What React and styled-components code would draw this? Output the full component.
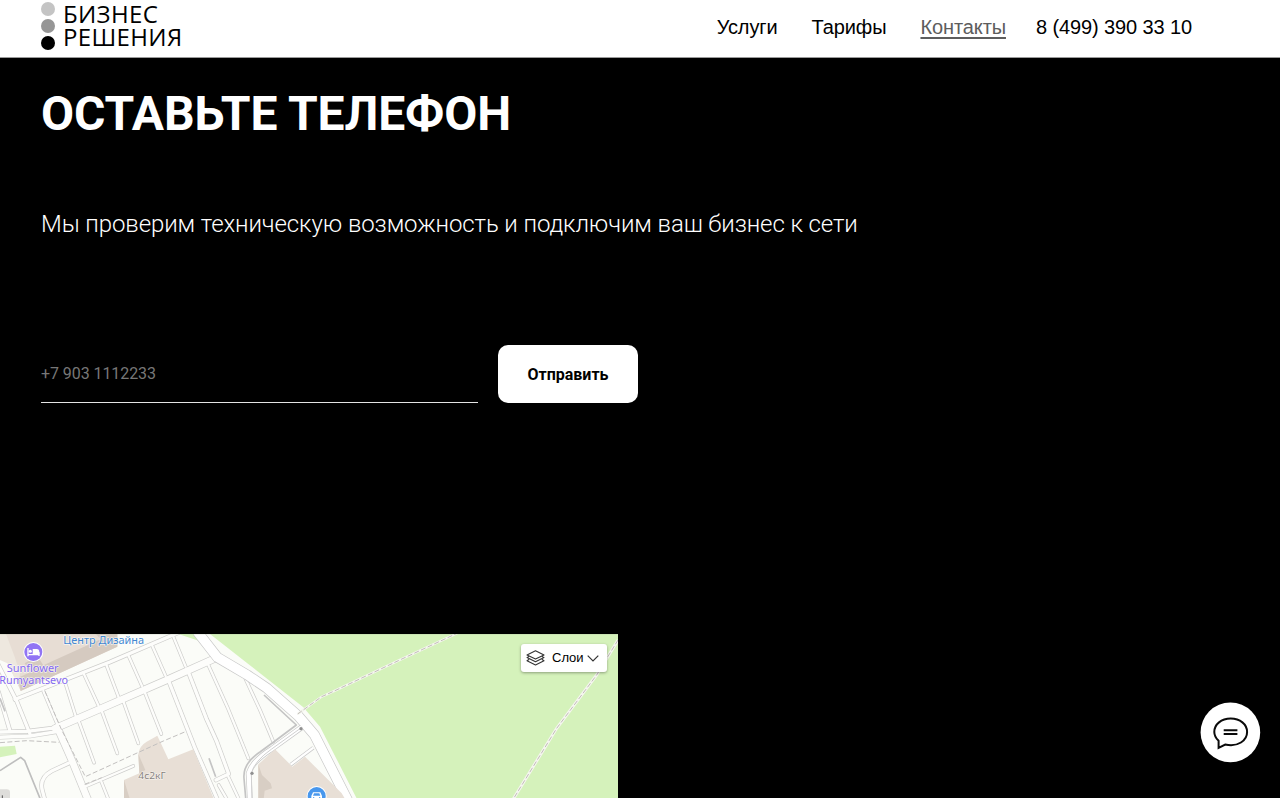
import React from "react";
import styled, { createGlobalStyle } from "styled-components";

const Global = createGlobalStyle`
  *, *::before, *::after { box-sizing: border-box; }
  html, body { margin: 0; background: #000; }
  body { height: 798px; overflow: hidden; }
`;

const Page = styled.div`
  display: flex;
  flex-direction: column;
  width: 1280px;
  height: 798px;
  overflow: hidden;
  background: #000;
  color: #fff;
  font-family: Roboto, sans-serif;
`;

const Header = styled.header`
  display: flex;
  flex: none;
  justify-content: space-between;
  height: 58px;
  padding: 0 88px 0 41px;
  background: #fff;
  border-bottom: 1px solid #9b9b9b;
  color: #000;
`;

const Logo = styled.a`
  display: flex;
  gap: 8px;
  height: 52px;
`;

const Dots = styled.span`
  display: flex;
  flex-direction: column;
  gap: 3px;
  padding-top: 2px;
`;

const Dot = styled.span`
  width: 14px;
  height: 14px;
  border-radius: 50%;
  background: ${(p) => p.$color};
`;

const LogoText = styled.span`
  padding-top: 2px;
  font: 400 24px/23px "Open Sans", sans-serif;
  letter-spacing: 0.35px;
  white-space: nowrap;
`;

const Nav = styled.nav`
  display: flex;
  font: 20px/55px "Liberation Sans", Arial, sans-serif;
  letter-spacing: -0.11px;
  white-space: nowrap;
`;

const NavItem = styled.a`
  margin-left: ${(p) => p.$gap || "34px"};
  color: ${(p) => (p.$active ? "#5d5d5d" : "#000")};
  text-decoration: ${(p) => (p.$active ? "underline 2px" : "none")};
  text-underline-offset: 3px;
  text-decoration-skip-ink: none;
`;

const Main = styled.main`
  display: flex;
  flex: none;
  flex-direction: column;
  height: 576px;
  padding: 26px 41px 0;
`;

const Title = styled.h1`
  margin: 0;
  font-size: 48px;
  font-weight: 700;
  line-height: 59px;
  letter-spacing: -0.1px;
`;

const Lead = styled.p`
  margin: 63px 0 0;
  font-size: 24px;
  font-weight: 300;
  line-height: 36px;
  letter-spacing: -0.1px;
`;

const Form = styled.form`
  display: flex;
  gap: 20px;
  margin-top: 103px;
`;

const Phone = styled.input`
  width: 437px;
  height: 58px;
  padding: 0;
  border: 0;
  border-bottom: 1px solid #e4e4e4;
  outline: 0;
  background: transparent;
  color: #fff;
  font: 400 16px Roboto, sans-serif;
  letter-spacing: -0.07px;
  &::placeholder { color: #777; opacity: 1; }
`;

const Submit = styled.button`
  width: 140px;
  height: 58px;
  border: 0;
  border-radius: 10px;
  background: #fff;
  color: #000;
  font: 700 16px Roboto, sans-serif;
`;

const MapFrame = styled.section`
  position: relative;
  width: 618px;
  height: 164px;
  overflow: hidden;
`;

const MapDrawing = styled.svg`
  display: block;
  width: 618px;
  height: 164px;
`;

const Layers = styled.button`
  position: absolute;
  top: 10px;
  right: 11px;
  display: flex;
  align-items: center;
  width: 86px;
  height: 28px;
  padding: 0 8px 0 5px;
  border: 0;
  border-radius: 3px;
  background: #fff;
  box-shadow: 0 1px 3px rgba(0, 0, 0, 0.35);
  color: #000;
  font: 13px "Liberation Sans", Arial, sans-serif;
`;

const LayersLabel = styled.span`
  flex: 1;
  padding: 0 0 1px 7px;
  text-align: left;
`;

const ChatButton = styled.button`
  position: absolute;
  left: 1200px;
  top: 702px;
  width: 61px;
  height: 61px;
  padding: 0;
  border: 0;
  border-radius: 50%;
  background: transparent;
`;

const ChatIcon = styled.svg`
  display: block;
  width: 61px;
  height: 61px;
`;

const wide = [
  "M165 295 L330 224 L500 150 L652 82",
  "M172 292 L215 390 L266 515",
];

const streets = [
  "M45 208 L330 96 L535 8",
  "M-5 105 L50 213 L90 312",
  "M-5 185 L30 303",
  "M-5 306 L80 304 L172 293",
  "M-5 322 L90 318 L175 304",
  "M505 150 L584 352 L655 515",
  "M565 126 L620 268 L650 334 L686 432 L648 450",
  "M205 400 L155 423 Q115 445 128 485 L136 515",
];

const lanes = [
  "M130 183 L174 288",
  "M193 150 L227 258",
  "M250 128 L295 226",
  "M318 102 L356 202",
  "M385 76 L426 168",
  "M457 48 L497 138",
  "M520 20 L557 110",
  "M235 270 L282 398",
  "M304 240 L352 370",
  "M370 214 L415 340",
  "M434 186 L484 312",
  "M625 105 L685 238 L745 385",
  "M737 148 L780 240 L820 335",
  "M255 470 L400 408",
  "M304 455 L328 515",
  "M685 440 L720 515",
  "M656 465 L685 515",
];

function Roads({ paths, width, casing }) {
  return (
    <g fill="none" strokeLinecap="round" strokeLinejoin="round"
      stroke={casing ? "#cdcdcb" : "#fdfdfb"} strokeWidth={casing ? width + 4 : width}>
      {paths.map((d) => <path key={d} d={d} />)}
    </g>
  );
}

function CityMap() {
  return (
    <MapDrawing viewBox="0 12 1854 492">
      <rect y="12" width="1854" height="492" fill="#fbfcf8" />
      <path d="M630 12 L740 98 L910 232 L960 290 L1075 515 L1854 515 L1854 12Z" fill="#d5f2bb" />
      <path d="M0 350 L45 347 L50 372 L0 382Z M535 12 L600 12 L614 38Z" fill="#d5f2bb" />
      <path d="M0 12 L352 12 L352 50 L62 183 L20 90 L0 60Z" fill="#e7ddd4" />
      <path d="M288 12 L352 12 L352 50 L62 183 L54 143 L92 126 L74 100 L112 78 L130 106 L302 28Z" fill="#d5cac0" />
      <path d="M0 12 L18 12 L44 80 L60 130 L54 165 L22 100 L0 90Z" fill="#eee8df" />

      <Roads paths={streets} width={10} casing />
      <Roads paths={lanes} width={7} casing />
      <Roads paths={wide} width={20} casing />
      <Roads paths={streets} width={10} />
      <Roads paths={lanes} width={7} />
      <Roads paths={wide} width={20} />

      <g fill="none" strokeLinejoin="round">
        <path d="M0 422 L62 382 L74 392 L124 515" stroke="#bebebe" strokeWidth="5" />
        <path d="M0 205 L15 244 M627 385 L647 440" stroke="#c4c4c4" strokeWidth="5" />
        <path d="M592 5 L652 82 L742 135 L800 174 L895 258 L943 314 L1045 515" stroke="#c8c8c8" strokeWidth="32" />
        <path d="M592 5 L652 82 L742 135 L800 174 L895 258 L943 314 L1045 515" stroke="#fff" strokeWidth="28" />
        <path d="M792 195 L889 285 L825 333 L780 366 Q728 400 732 445 L738 515" stroke="#c4c4c4" strokeWidth="5" />
        <path d="M905 292 L815 357 Q755 395 746 430 L750 515" stroke="#c8c8c8" strokeWidth="17" />
        <path d="M905 292 L815 357 Q755 395 746 430 L750 515" stroke="#fff" strokeWidth="13" />
        <path d="M900 296 L815 357 Q763 393 754 430 L756 515" stroke="#d0d0d0" strokeWidth="3" />
      </g>

      <path d="M415 372 Q418 348 440 335 L472 317 L505 388 L580 358 L645 515 L372 515 L372 450 L418 430Z" fill="#e8dfd6" />
      <path d="M415 372 L418 430 L436 420Z M372 450 L372 515 L392 515Z" fill="#d8cec4" />
      <path d="M775 403 L825 358 L877 410 L915 380 L1025 490 L1040 515 L775 515Z" fill="#e8dfd6" />
      <path d="M775 403 L775 515 L790 515 L794 482 L816 475 L812 460 L786 435Z" fill="#d8cec4" />
      <path d="M872 404 L940 353" stroke="#c8c8c8" strokeWidth="11" />
      <path d="M872 404 L940 353" stroke="#fff" strokeWidth="7" />
      <circle cx="903" cy="296" r="5" fill="#909090" />
      <circle cx="756" cy="430" r="5" fill="#909090" />

      <g fill="none" stroke="#c2c0bf" strokeWidth="3" strokeDasharray="15 7">
        <path d="M135 184 L185 300 L256 440 L490 333 L554 306" />
        <path d="M0 338 L80 332 L178 337" />
        <path d="M254 463 L305 443" />
      </g>

      <g fill="none">
        <path d="M893 252 L965 200 L1005 182 L1195 92 L1375 8" stroke="#f5f6ef" strokeWidth="7" />
        <path d="M893 252 L965 200 L1005 182 L1195 92 L1375 8" stroke="#c2bdb9" strokeWidth="3" strokeDasharray="15 7" />
        <path d="M1854 30 L1790 135 L1670 295 L1535 515" stroke="#f5f6ef" strokeWidth="9" />
        <path d="M1854 30 L1790 135 L1670 295 L1535 515" stroke="#c2bdb9" strokeWidth="3" strokeDasharray="15 7" />
      </g>
      <path d="M0 12H1854" stroke="#a5b398" strokeWidth="2" opacity=".6" />

      <g fontFamily="Noto Sans, sans-serif" strokeLinejoin="round" paintOrder="stroke" stroke="#fff" strokeOpacity=".7" strokeWidth="4">
        <text x="190" y="43" fontSize="30" fill="#4388d2" textLength="242" lengthAdjust="spacingAndGlyphs">Центр Дизайна</text>
        <text x="20" y="126" fontSize="30" fill="#8468f0" textLength="156" lengthAdjust="spacingAndGlyphs">Sunflower</text>
        <text x="-2" y="163" fontSize="30" fill="#8468f0" textLength="206" lengthAdjust="spacingAndGlyphs">Rumyantsevo</text>
        <text x="415" y="447" fontSize="28" fill="#87817d" strokeWidth="3" textLength="82" lengthAdjust="spacingAndGlyphs">4с2кГ</text>
      </g>

      <circle cx="100" cy="66" r="30" fill="#fff" />
      <circle cx="100" cy="66" r="27" fill="#9174f4" />
      <path d="M84 54v25M84 74h33M117 78V67" fill="none" stroke="#fff" strokeWidth="4" />
      <path d="M98 57h12q8 0 8 10v5H98z" fill="#fff" />
      <circle cx="91" cy="64" r="4.5" fill="#fff" />

      <circle cx="950" cy="498" r="30" fill="#fff" />
      <circle cx="950" cy="498" r="27" fill="#4897ed" />
      <path d="M939 487h22l5 11v16h-32v-16z" fill="#fff" />
      <path d="M942 490h16l3 7h-22z" fill="#4897ed" />
      <circle cx="941" cy="503" r="2" fill="#4897ed" />
      <circle cx="959" cy="503" r="2" fill="#4897ed" />

      <path d="M0 478H20Q30 478 30 488V504H0Z" fill="#deddda" />
      <path d="M7 496v10" stroke="#555" strokeWidth="3" />
    </MapDrawing>
  );
}

export default function App() {
  return (
    <Page>
      <Global />
      <Header>
        <Logo>
          <Dots>
            <Dot $color="#c4c4c4" />
            <Dot $color="#969696" />
            <Dot $color="#000" />
          </Dots>
          <LogoText>
            БИЗНЕС<br />РЕШЕНИЯ
          </LogoText>
        </Logo>
        <Nav>
          <NavItem>Услуги</NavItem>
          <NavItem>Тарифы</NavItem>
          <NavItem $active>Контакты</NavItem>
          <NavItem $gap="30px">8 (499) 390 33 10</NavItem>
        </Nav>
      </Header>
      <Main>
        <Title>ОСТАВЬТЕ ТЕЛЕФОН</Title>
        <Lead>Мы проверим техническую возможность и подключим ваш бизнес к сети</Lead>
        <Form>
          <Phone type="tel" placeholder="+7 903 1112233" />
          <Submit type="button">Отправить</Submit>
        </Form>
      </Main>
      <MapFrame>
        <CityMap />
        <Layers>
          <svg width="19" height="16" viewBox="0 0 19 16" fill="none" stroke="#333" strokeWidth="1.1" strokeLinejoin="round">
            <path d="M9.5 .7L18 4.9L9.5 9.1L1 4.9Z" />
            <path d="M3.2 6.2L1 7.6L9.5 11.8L18 7.6L15.8 6.2" />
            <path d="M3.2 9.3L1 10.7L9.5 15L18 10.7L15.8 9.3" />
          </svg>
          <LayersLabel>Слои</LayersLabel>
          <svg width="12" height="7" viewBox="0 0 12 7" fill="none" stroke="#333" strokeWidth="1.2">
            <path d="M.7 .7L6 6L11.3 .7" />
          </svg>
        </Layers>
      </MapFrame>
      <ChatButton aria-label="Чат">
        <ChatIcon viewBox="0 0 61 61" fill="none" stroke="#0a0a0a" strokeWidth="2">
          <circle cx="30.4" cy="30.4" r="29.8" fill="#fff" stroke="none" />
          <path d="M18.6 45.9V38.8C15.6 35.9 14.3 33 14.3 30C14.3 22.2 21.4 16.6 30.7 16.6C40 16.6 47.1 22.2 47.1 30C47.1 38.6 38 45.2 25.2 42.5Z" />
          <path d="M23.7 28.2H37.4M23.7 31.9H37.4" />
        </ChatIcon>
      </ChatButton>
    </Page>
  );
}
